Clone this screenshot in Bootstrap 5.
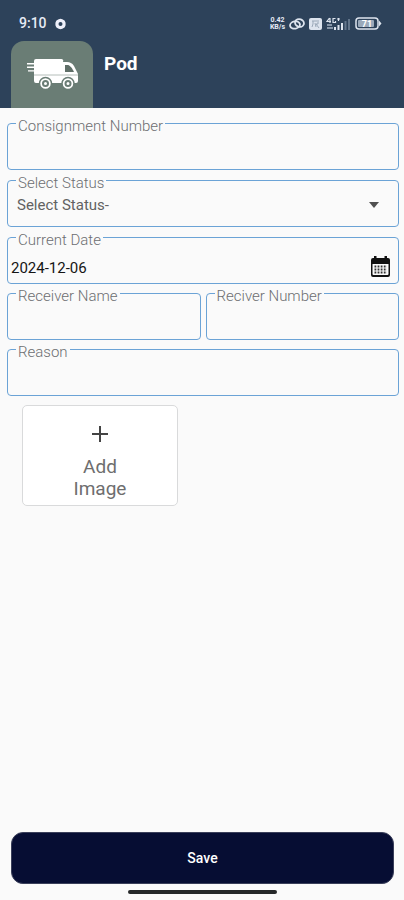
<!DOCTYPE html>
<html lang="en">
<head>
<meta charset="utf-8">
<meta name="viewport" content="width=device-width, initial-scale=1">
<title>Pod</title>
<link href="https://cdn.jsdelivr.net/npm/bootstrap@5.3.0/dist/css/bootstrap.min.css" rel="stylesheet">
<style>
  body { font-family: Roboto, "Liberation Sans", sans-serif; background: #fafafa; }
  svg { display: block; flex: none; }
  .top-bar { background: #2d425a; color: #fff; }
  .status-row { height: 41px; padding: 6px 22px 0 19px; font-size: 14px; color: #e6ebf5; }
  .net-rate { font-size: 7px; line-height: 7px; }
  .brand-row { padding-left: 11px; }
  .logo-tile { width: 82px; height: 67px; background: #6a7d75; border-radius: 13px 13px 0 0; }
  .page-title { font-size: 19px; line-height: 24px; margin: 11px 0 0 11px; }
  .form-area { padding: 15px 5px 0 7px; }
  .stack-a { display: grid; gap: 10px; margin-bottom: 9px; }
  .stack-b { display: grid; gap: 9px; }
  .pair { display: grid; grid-template-columns: 1fr 1fr; gap: 5px; }
  .outlined { height: 47px; border: 1px solid #6ba3d6; border-radius: 4px; }
  .outlined > label { width: fit-content; margin: -7px 0 0 8px; padding: 0 2px; background: #fafafa; color: #6c6e71; font-size: 15px; font-weight: 300; line-height: 18px; }
  .outlined input, .outlined select { border: 0; background: transparent; outline: 0; font-size: 15px; line-height: 20px; height: 34px; min-width: 0; color: #151515; }
  .outlined select { appearance: none; color: #626262; padding: 0 9px 8px; margin-right: -28px; }
  .outlined .date-text { padding: 3px 3px 0; }
  .select-caret { margin: 10px 19px 0 0; }
  .add-tile { width: 156px; height: 101px; margin: 9px 0 0 15px; padding: 20px 0 0; background: #fff; border: 1px solid #d9dadb; border-radius: 5px; color: #6e6e6e; font-size: 19px; line-height: 22px; }
  .add-plus { margin-bottom: 14px; }
  .bottom-area { padding: 0 10px 6px 11px; }
  .save-btn { height: 52px; background: #060d33; color: #fff; border-radius: 12px; border: 1px solid #3a3f5a; font-size: 14px; font-weight: 500; }
  .save-btn:hover { background: #0c1545; color: #fff; }
  .home-pill { width: 149px; height: 4px; border-radius: 2px; background: #262829; margin: 6px auto 0; }
</style>
<script src="https://cdn.jsdelivr.net/npm/bootstrap@5.3.0/dist/js/bootstrap.bundle.min.js"></script>
</head>
<body class="d-flex flex-column min-vh-100">
<header class="top-bar">
  <div class="status-row d-flex align-items-center">
    <span class="fw-medium">9:10</span>
    <svg class="ms-2" width="11" height="12" viewBox="0 0 12 12"><path fill="#eef0fa" fill-rule="evenodd" d="M4 .8 6 .2l2 .6 2.400 1.400 1 1.900.2 1.900-.2 1.900-1 1.900L8 11.200l-2 .6-2-.6-2.400-1.400-1-1.900L.4 6l.2-1.900 1-1.900zM6 3.800a2.200 2.200 0 1 0 0 4.400 2.200 2.200 0 0 0 0-4.400z"/></svg>
    <div class="ms-auto d-flex align-items-center">
      <span class="net-rate fw-bold text-center">0.42<br>KB/s</span>
      <svg class="ms-1" width="16" height="14" viewBox="0 0 16 14" fill="none" stroke="#dde4ee" stroke-width="1.800"><ellipse cx="6" cy="8" rx="5" ry="3.600" transform="rotate(-12 6 8)"/><ellipse cx="10.500" cy="6" rx="4.500" ry="3.800" transform="rotate(20 10.500 6)"/></svg>
      <svg class="ms-1" width="13" height="12" viewBox="0 0 13 12"><rect width="13" height="12" rx="2" fill="#dde4ee"/><path d="M3 3h7M4 3v3l-1 3M6 5l1 4M9 4v2H7l3 4" fill="none" stroke="#9aa8b8"/></svg>
      <svg class="ms-1" width="25" height="14" viewBox="0 0 25 14"><path d="M3.500 1 1 4.500h4M4 1v5M9.500 1.500H7v4h2.500V4M11 2h3M12.500 1v3" fill="none" stroke="#dde4ee" stroke-width="1.200"/><path d="M1 8h5M1 11h6" stroke="#a5b3c2" stroke-width="1.500"/><path d="M8 10h2v3H8zM11.500 8h2v5h-2zM15 6h2v7h-2z" fill="#dde4ee"/><path d="M18.500 4h2v9h-2zM22 2h2v11h-2z" fill="#62758b"/></svg>
      <svg class="ms-1" width="27" height="14" viewBox="0 0 27 14"><rect x="1" y="1" width="22" height="11" rx="3" fill="none" stroke="#dde4ee" stroke-width="1.500"/><rect x="3" y="3" width="16" height="7" rx="1" fill="#9aa9ba"/><path d="m24 3.500 2.500 3-2.500 3z" fill="#dde4ee"/><text x="12" y="10" text-anchor="middle" font-size="9" font-weight="700" fill="#fff">71</text></svg>
    </div>
  </div>
  <div class="brand-row d-flex align-items-start">
    <div class="logo-tile">
      <svg width="82" height="66" viewBox="0 0 82 66">
        <path fill="#fff" d="M25 18h25a2 2 0 0 1 2 3h4c3 0 5 1 7 4l4 8v7a2 2 0 0 1-2 2H25a2 2 0 0 1-2-2v-9.500h-6v-1.200h6v-2.200h-7v-1.500h7v-2.200h-7v-1.500h7V20a2 2 0 0 1 2-2z"/>
        <path fill="#5f6f68" d="M54 24h3c2.500.5 4.500 4 6 7h-9z"/>
        <path stroke="#b5beba" d="M23 34h44"/>
        <g fill="#fff" stroke="#6a7d75" stroke-width="1.500"><circle cx="34.500" cy="42.500" r="6"/><circle cx="57" cy="42.500" r="6"/></g>
        <g fill="#fff" stroke="#6a7d75" stroke-width="2"><circle cx="34.500" cy="42.500" r="2.500"/><circle cx="57" cy="42.500" r="2.500"/></g>
      </svg>
    </div>
    <h1 class="page-title fw-bold">Pod</h1>
  </div>
</header>

<form class="d-flex flex-column flex-grow-1">
  <div class="form-area">
    <div class="stack-a">
      <div class="outlined d-flex flex-column">
        <label for="consignment">Consignment Number</label>
        <input id="consignment" type="text" class="w-100 px-2">
      </div>
      <div class="outlined d-flex flex-column">
        <label for="status">Select Status</label>
        <div class="d-flex align-items-start">
          <select id="status" class="flex-grow-1"><option>Select Status-</option></select>
          <svg class="select-caret pe-none" width="10" height="6" viewBox="0 0 10 6"><path fill="#505050" d="M0 0h10L5 6z"/></svg>
        </div>
      </div>
      <div class="outlined d-flex flex-column">
        <label for="date">Current Date</label>
        <div class="d-flex align-items-center">
          <input id="date" type="text" value="2024-12-06" class="date-text flex-grow-1">
          <button type="button" class="btn p-0 border-0 me-2" aria-label="Choose date">
            <svg width="19" height="21" viewBox="0 0 19 21"><path fill="#111" fill-rule="evenodd" d="M3 0h2.500v2h8V0H16v2h1a2 2 0 0 1 2 2v15a2 2 0 0 1-2 2H2a2 2 0 0 1-2-2V4a2 2 0 0 1 2-2h1zM1.500 8v10a1 1 0 0 0 1 1h14a1 1 0 0 0 1-1V8z"/><path stroke="#333" stroke-width="1.800" stroke-dasharray="1.800 1.300" d="M3.500 10.500h12.500M3.500 13.500h12.500M3.500 16.500h12.500"/></svg>
          </button>
        </div>
      </div>
    </div>
    <div class="stack-b">
      <div class="pair">
        <div class="outlined d-flex flex-column">
          <label for="receiver">Receiver Name</label>
          <input id="receiver" type="text" class="w-100 px-2">
        </div>
        <div class="outlined d-flex flex-column">
          <label for="number">Reciver Number</label>
          <input id="number" type="text" class="w-100 px-2">
        </div>
      </div>
      <div class="outlined d-flex flex-column">
        <label for="reason">Reason</label>
        <input id="reason" type="text" class="w-100 px-2">
      </div>
    </div>
    <button type="button" class="add-tile d-flex flex-column align-items-center">
      <svg class="add-plus" width="16" height="16" viewBox="0 0 16 16"><path stroke="#444" stroke-width="2" d="M8 0v16M0 8h16"/></svg>
      <span>Add<br>Image</span>
    </button>
  </div>
  <div class="bottom-area mt-auto">
    <button type="submit" class="save-btn btn w-100">Save</button>
    <div class="home-pill"></div>
  </div>
</form>
</body>
</html>
